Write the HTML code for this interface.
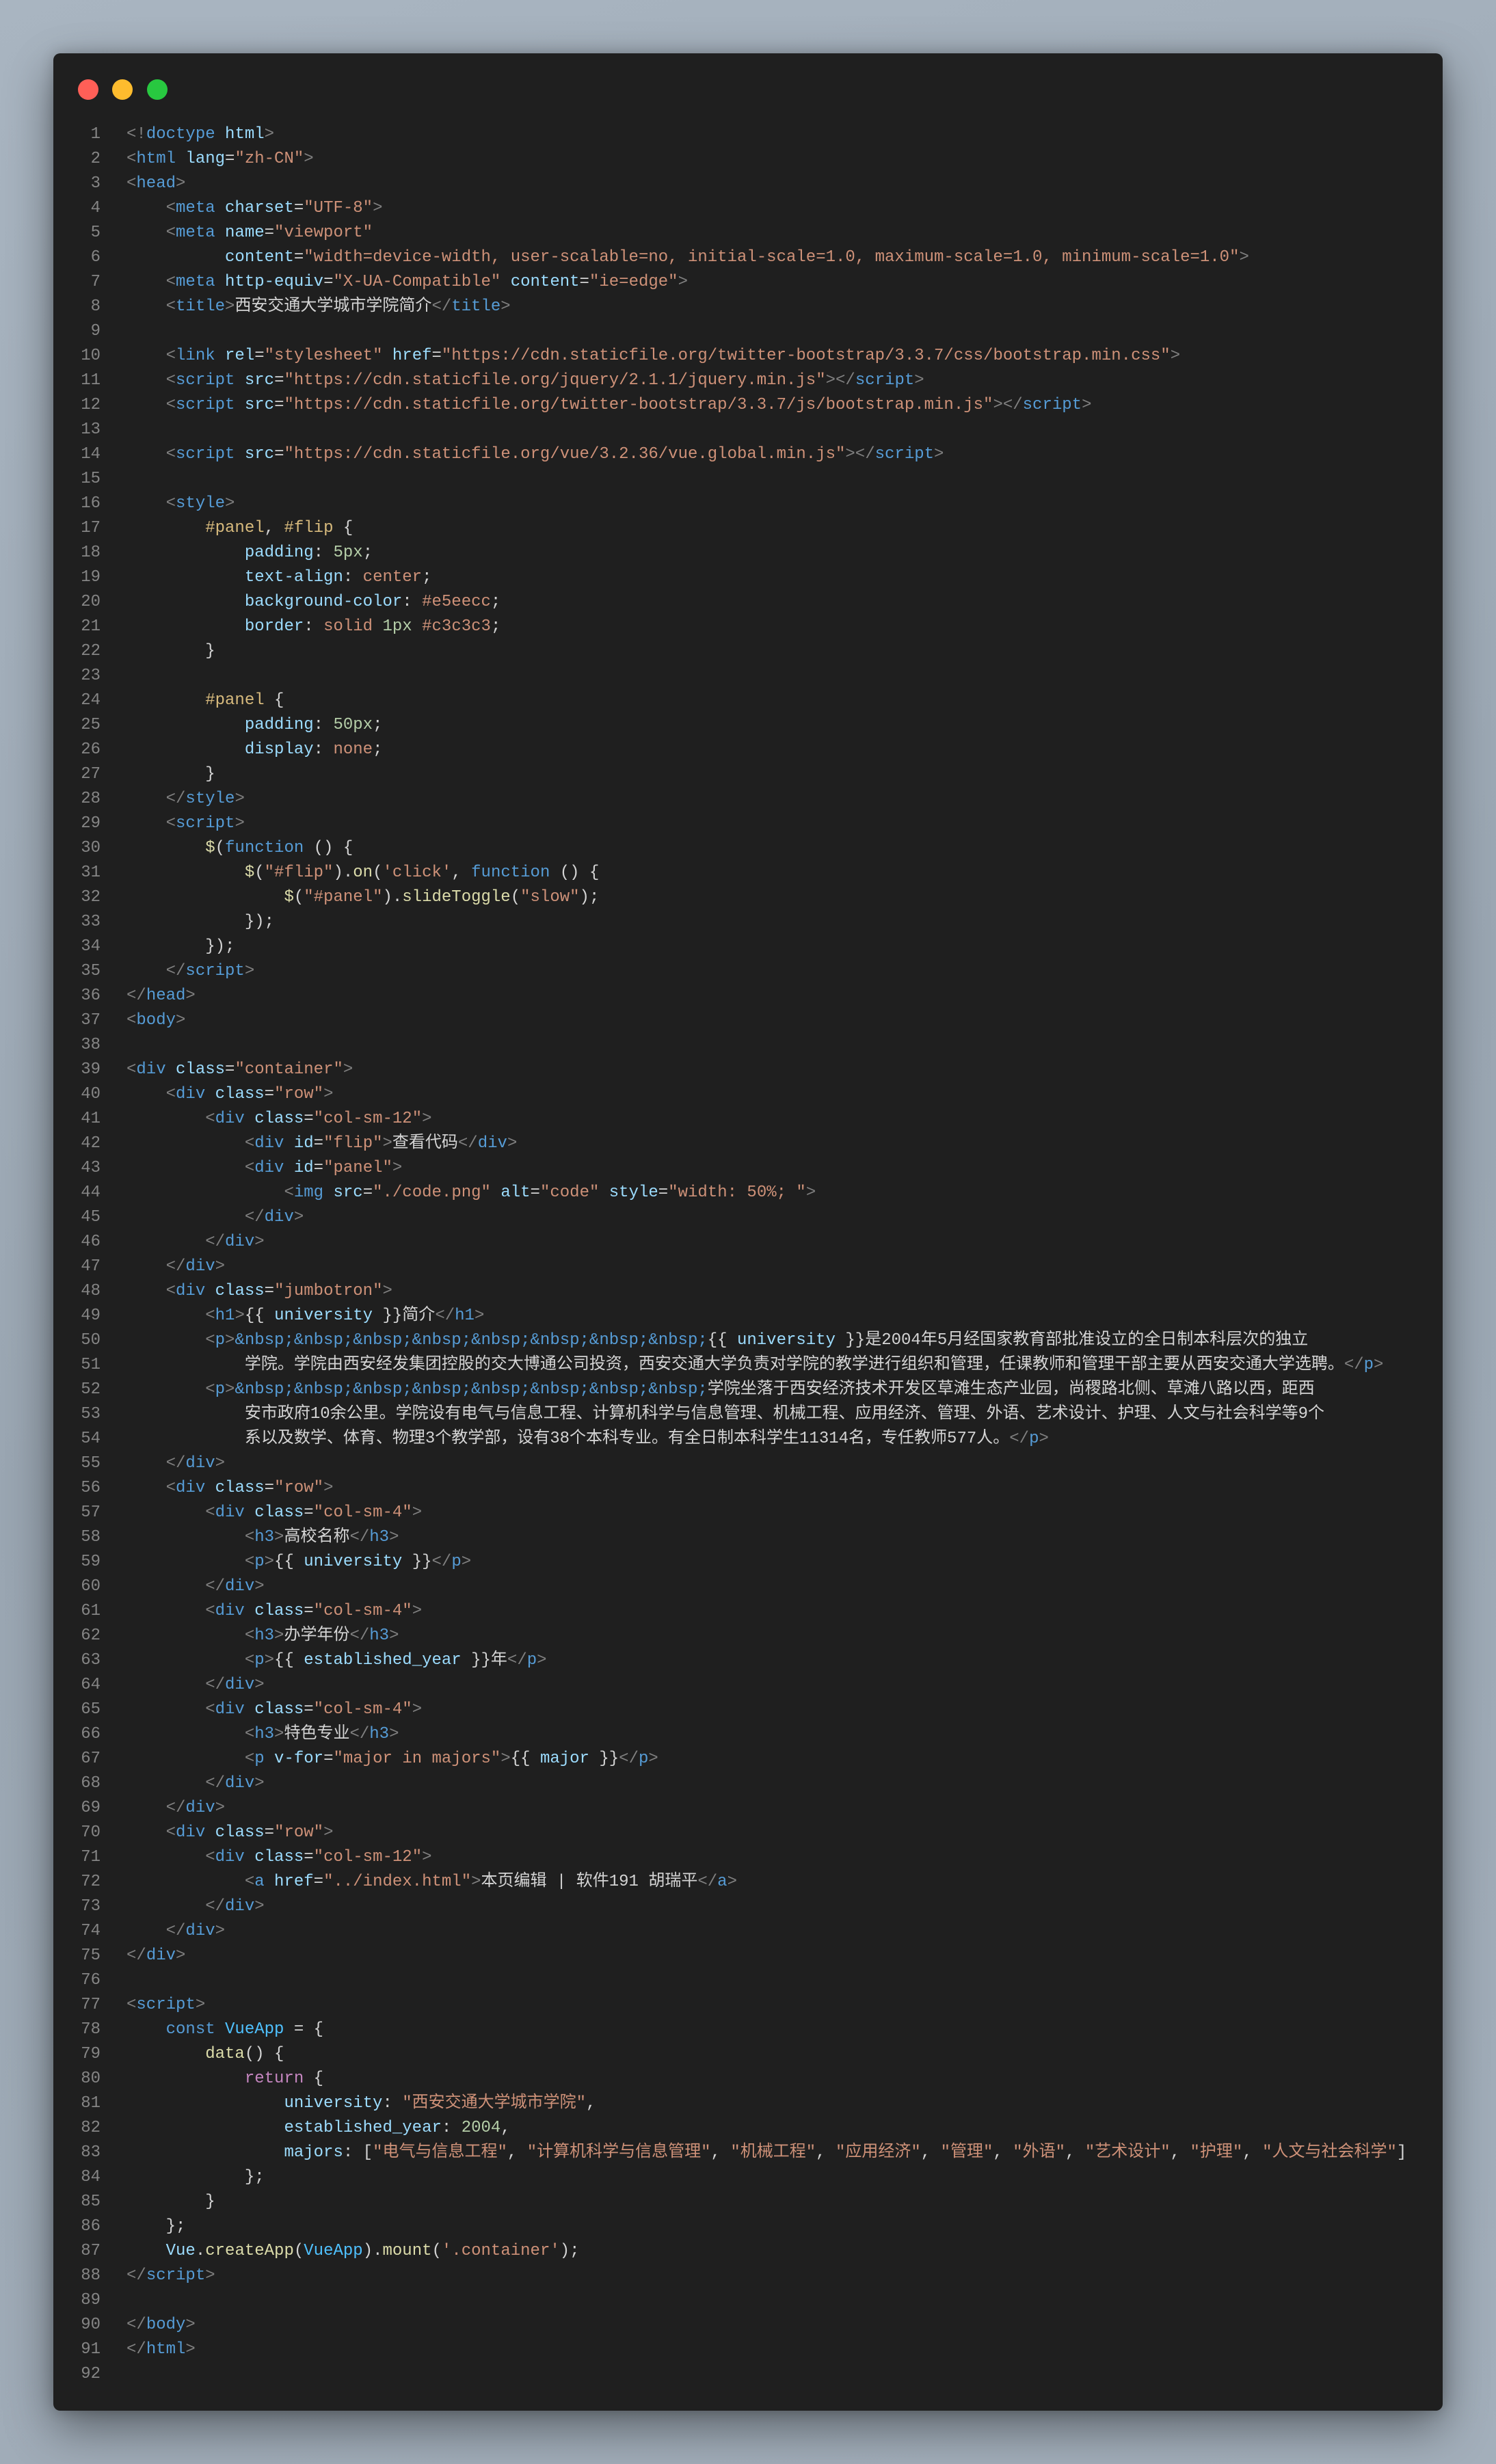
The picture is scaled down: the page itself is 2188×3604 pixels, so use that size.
<!DOCTYPE html>
<html><head><meta charset="utf-8">
<style>
html,body{margin:0;padding:0;}
body{width:2188px;height:3604px;background:linear-gradient(160deg,#a9b5c1 0%,#9aa6b2 50%,#a3afbb 100%);position:relative;overflow:hidden;}
.win{position:absolute;left:78px;top:78px;width:2032px;height:3448px;background:#1f1f1f;border-radius:10px;box-shadow:0 24px 70px rgba(0,0,0,.45),0 0 20px rgba(0,0,0,.2);}
.dot{position:absolute;top:116px;width:30px;height:30px;border-radius:50%;}
pre{margin:0;position:absolute;top:179px;font-family:"Liberation Mono","Noto Sans CJK SC",monospace;font-size:24px;line-height:36px;color:#d4d4d4;white-space:pre;}
.ln{left:0;width:147px;text-align:right;color:#858585;}
.code{left:185px;}
.p{color:#808080}.t{color:#569cd6}.a{color:#9cdcfe}.s{color:#ce9178}.y{color:#dcdcaa}.n{color:#b5cea8}.c{color:#d7ba7d}.r{color:#c586c0}.v{color:#4fc1ff}
</style></head><body>
<div class="win"></div>
<div class="dot" style="left:114px;background:#ff5f57"></div>
<div class="dot" style="left:164px;background:#febc2e"></div>
<div class="dot" style="left:215px;background:#28c840"></div>
<pre class="ln">1
2
3
4
5
6
7
8
9
10
11
12
13
14
15
16
17
18
19
20
21
22
23
24
25
26
27
28
29
30
31
32
33
34
35
36
37
38
39
40
41
42
43
44
45
46
47
48
49
50
51
52
53
54
55
56
57
58
59
60
61
62
63
64
65
66
67
68
69
70
71
72
73
74
75
76
77
78
79
80
81
82
83
84
85
86
87
88
89
90
91
92</pre>
<pre class="code"><span class="p">&lt;!</span><span class="t">doctype</span> <span class="a">html</span><span class="p">&gt;</span>
<span class="p">&lt;</span><span class="t">html</span> <span class="a">lang</span>=<span class="s">"zh-CN"</span><span class="p">&gt;</span>
<span class="p">&lt;</span><span class="t">head</span><span class="p">&gt;</span>
    <span class="p">&lt;</span><span class="t">meta</span> <span class="a">charset</span>=<span class="s">"UTF-8"</span><span class="p">&gt;</span>
    <span class="p">&lt;</span><span class="t">meta</span> <span class="a">name</span>=<span class="s">"viewport"</span>
          <span class="a">content</span>=<span class="s">"width=device-width, user-scalable=no, initial-scale=1.0, maximum-scale=1.0, minimum-scale=1.0"</span><span class="p">&gt;</span>
    <span class="p">&lt;</span><span class="t">meta</span> <span class="a">http-equiv</span>=<span class="s">"X-UA-Compatible"</span> <span class="a">content</span>=<span class="s">"ie=edge"</span><span class="p">&gt;</span>
    <span class="p">&lt;</span><span class="t">title</span><span class="p">&gt;</span>西安交通大学城市学院简介<span class="p">&lt;/</span><span class="t">title</span><span class="p">&gt;</span>

    <span class="p">&lt;</span><span class="t">link</span> <span class="a">rel</span>=<span class="s">"stylesheet"</span> <span class="a">href</span>=<span class="s">"https://cdn.staticfile.org/twitter-bootstrap/3.3.7/css/bootstrap.min.css"</span><span class="p">&gt;</span>
    <span class="p">&lt;</span><span class="t">script</span> <span class="a">src</span>=<span class="s">"https://cdn.staticfile.org/jquery/2.1.1/jquery.min.js"</span><span class="p">&gt;&lt;/</span><span class="t">script</span><span class="p">&gt;</span>
    <span class="p">&lt;</span><span class="t">script</span> <span class="a">src</span>=<span class="s">"https://cdn.staticfile.org/twitter-bootstrap/3.3.7/js/bootstrap.min.js"</span><span class="p">&gt;&lt;/</span><span class="t">script</span><span class="p">&gt;</span>

    <span class="p">&lt;</span><span class="t">script</span> <span class="a">src</span>=<span class="s">"https://cdn.staticfile.org/vue/3.2.36/vue.global.min.js"</span><span class="p">&gt;&lt;/</span><span class="t">script</span><span class="p">&gt;</span>

    <span class="p">&lt;</span><span class="t">style</span><span class="p">&gt;</span>
        <span class="c">#panel</span>, <span class="c">#flip</span> {
            <span class="a">padding</span>: <span class="n">5px</span>;
            <span class="a">text-align</span>: <span class="s">center</span>;
            <span class="a">background-color</span>: <span class="s">#e5eecc</span>;
            <span class="a">border</span>: <span class="s">solid</span> <span class="n">1px</span> <span class="s">#c3c3c3</span>;
        }

        <span class="c">#panel</span> {
            <span class="a">padding</span>: <span class="n">50px</span>;
            <span class="a">display</span>: <span class="s">none</span>;
        }
    <span class="p">&lt;/</span><span class="t">style</span><span class="p">&gt;</span>
    <span class="p">&lt;</span><span class="t">script</span><span class="p">&gt;</span>
        <span class="y">$</span>(<span class="t">function</span> () {
            <span class="y">$</span>(<span class="s">"#flip"</span>).<span class="y">on</span>(<span class="s">'click'</span>, <span class="t">function</span> () {
                <span class="y">$</span>(<span class="s">"#panel"</span>).<span class="y">slideToggle</span>(<span class="s">"slow"</span>);
            });
        });
    <span class="p">&lt;/</span><span class="t">script</span><span class="p">&gt;</span>
<span class="p">&lt;/</span><span class="t">head</span><span class="p">&gt;</span>
<span class="p">&lt;</span><span class="t">body</span><span class="p">&gt;</span>

<span class="p">&lt;</span><span class="t">div</span> <span class="a">class</span>=<span class="s">"container"</span><span class="p">&gt;</span>
    <span class="p">&lt;</span><span class="t">div</span> <span class="a">class</span>=<span class="s">"row"</span><span class="p">&gt;</span>
        <span class="p">&lt;</span><span class="t">div</span> <span class="a">class</span>=<span class="s">"col-sm-12"</span><span class="p">&gt;</span>
            <span class="p">&lt;</span><span class="t">div</span> <span class="a">id</span>=<span class="s">"flip"</span><span class="p">&gt;</span>查看代码<span class="p">&lt;/</span><span class="t">div</span><span class="p">&gt;</span>
            <span class="p">&lt;</span><span class="t">div</span> <span class="a">id</span>=<span class="s">"panel"</span><span class="p">&gt;</span>
                <span class="p">&lt;</span><span class="t">img</span> <span class="a">src</span>=<span class="s">"./code.png"</span> <span class="a">alt</span>=<span class="s">"code"</span> <span class="a">style</span>=<span class="s">"width: 50%; "</span><span class="p">&gt;</span>
            <span class="p">&lt;/</span><span class="t">div</span><span class="p">&gt;</span>
        <span class="p">&lt;/</span><span class="t">div</span><span class="p">&gt;</span>
    <span class="p">&lt;/</span><span class="t">div</span><span class="p">&gt;</span>
    <span class="p">&lt;</span><span class="t">div</span> <span class="a">class</span>=<span class="s">"jumbotron"</span><span class="p">&gt;</span>
        <span class="p">&lt;</span><span class="t">h1</span><span class="p">&gt;</span>{{ <span class="a">university</span> }}简介<span class="p">&lt;/</span><span class="t">h1</span><span class="p">&gt;</span>
        <span class="p">&lt;</span><span class="t">p</span><span class="p">&gt;</span><span class="t">&amp;nbsp;&amp;nbsp;&amp;nbsp;&amp;nbsp;&amp;nbsp;&amp;nbsp;&amp;nbsp;&amp;nbsp;</span>{{ <span class="a">university</span> }}是2004年5月经国家教育部批准设立的全日制本科层次的独立
            学院。学院由西安经发集团控股的交大博通公司投资，西安交通大学负责对学院的教学进行组织和管理，任课教师和管理干部主要从西安交通大学选聘。<span class="p">&lt;/</span><span class="t">p</span><span class="p">&gt;</span>
        <span class="p">&lt;</span><span class="t">p</span><span class="p">&gt;</span><span class="t">&amp;nbsp;&amp;nbsp;&amp;nbsp;&amp;nbsp;&amp;nbsp;&amp;nbsp;&amp;nbsp;&amp;nbsp;</span>学院坐落于西安经济技术开发区草滩生态产业园，尚稷路北侧、草滩八路以西，距西
            安市政府10余公里。学院设有电气与信息工程、计算机科学与信息管理、机械工程、应用经济、管理、外语、艺术设计、护理、人文与社会科学等9个
            系以及数学、体育、物理3个教学部，设有38个本科专业。有全日制本科学生11314名，专任教师577人。<span class="p">&lt;/</span><span class="t">p</span><span class="p">&gt;</span>
    <span class="p">&lt;/</span><span class="t">div</span><span class="p">&gt;</span>
    <span class="p">&lt;</span><span class="t">div</span> <span class="a">class</span>=<span class="s">"row"</span><span class="p">&gt;</span>
        <span class="p">&lt;</span><span class="t">div</span> <span class="a">class</span>=<span class="s">"col-sm-4"</span><span class="p">&gt;</span>
            <span class="p">&lt;</span><span class="t">h3</span><span class="p">&gt;</span>高校名称<span class="p">&lt;/</span><span class="t">h3</span><span class="p">&gt;</span>
            <span class="p">&lt;</span><span class="t">p</span><span class="p">&gt;</span>{{ <span class="a">university</span> }}<span class="p">&lt;/</span><span class="t">p</span><span class="p">&gt;</span>
        <span class="p">&lt;/</span><span class="t">div</span><span class="p">&gt;</span>
        <span class="p">&lt;</span><span class="t">div</span> <span class="a">class</span>=<span class="s">"col-sm-4"</span><span class="p">&gt;</span>
            <span class="p">&lt;</span><span class="t">h3</span><span class="p">&gt;</span>办学年份<span class="p">&lt;/</span><span class="t">h3</span><span class="p">&gt;</span>
            <span class="p">&lt;</span><span class="t">p</span><span class="p">&gt;</span>{{ <span class="a">established_year</span> }}年<span class="p">&lt;/</span><span class="t">p</span><span class="p">&gt;</span>
        <span class="p">&lt;/</span><span class="t">div</span><span class="p">&gt;</span>
        <span class="p">&lt;</span><span class="t">div</span> <span class="a">class</span>=<span class="s">"col-sm-4"</span><span class="p">&gt;</span>
            <span class="p">&lt;</span><span class="t">h3</span><span class="p">&gt;</span>特色专业<span class="p">&lt;/</span><span class="t">h3</span><span class="p">&gt;</span>
            <span class="p">&lt;</span><span class="t">p</span> <span class="a">v-for</span>=<span class="s">"major in majors"</span><span class="p">&gt;</span>{{ <span class="a">major</span> }}<span class="p">&lt;/</span><span class="t">p</span><span class="p">&gt;</span>
        <span class="p">&lt;/</span><span class="t">div</span><span class="p">&gt;</span>
    <span class="p">&lt;/</span><span class="t">div</span><span class="p">&gt;</span>
    <span class="p">&lt;</span><span class="t">div</span> <span class="a">class</span>=<span class="s">"row"</span><span class="p">&gt;</span>
        <span class="p">&lt;</span><span class="t">div</span> <span class="a">class</span>=<span class="s">"col-sm-12"</span><span class="p">&gt;</span>
            <span class="p">&lt;</span><span class="t">a</span> <span class="a">href</span>=<span class="s">"../index.html"</span><span class="p">&gt;</span>本页编辑 | 软件191 胡瑞平<span class="p">&lt;/</span><span class="t">a</span><span class="p">&gt;</span>
        <span class="p">&lt;/</span><span class="t">div</span><span class="p">&gt;</span>
    <span class="p">&lt;/</span><span class="t">div</span><span class="p">&gt;</span>
<span class="p">&lt;/</span><span class="t">div</span><span class="p">&gt;</span>

<span class="p">&lt;</span><span class="t">script</span><span class="p">&gt;</span>
    <span class="t">const</span> <span class="v">VueApp</span> = {
        <span class="y">data</span>() {
            <span class="r">return</span> {
                <span class="a">university</span>: <span class="s">"西安交通大学城市学院"</span>,
                <span class="a">established_year</span>: <span class="n">2004</span>,
                <span class="a">majors</span>: [<span class="s">"电气与信息工程"</span>, <span class="s">"计算机科学与信息管理"</span>, <span class="s">"机械工程"</span>, <span class="s">"应用经济"</span>, <span class="s">"管理"</span>, <span class="s">"外语"</span>, <span class="s">"艺术设计"</span>, <span class="s">"护理"</span>, <span class="s">"人文与社会科学"</span>]
            };
        }
    };
    <span class="a">Vue</span>.<span class="y">createApp</span>(<span class="v">VueApp</span>).<span class="y">mount</span>(<span class="s">'.container'</span>);
<span class="p">&lt;/</span><span class="t">script</span><span class="p">&gt;</span>

<span class="p">&lt;/</span><span class="t">body</span><span class="p">&gt;</span>
<span class="p">&lt;/</span><span class="t">html</span><span class="p">&gt;</span>
</pre>
</body></html>
